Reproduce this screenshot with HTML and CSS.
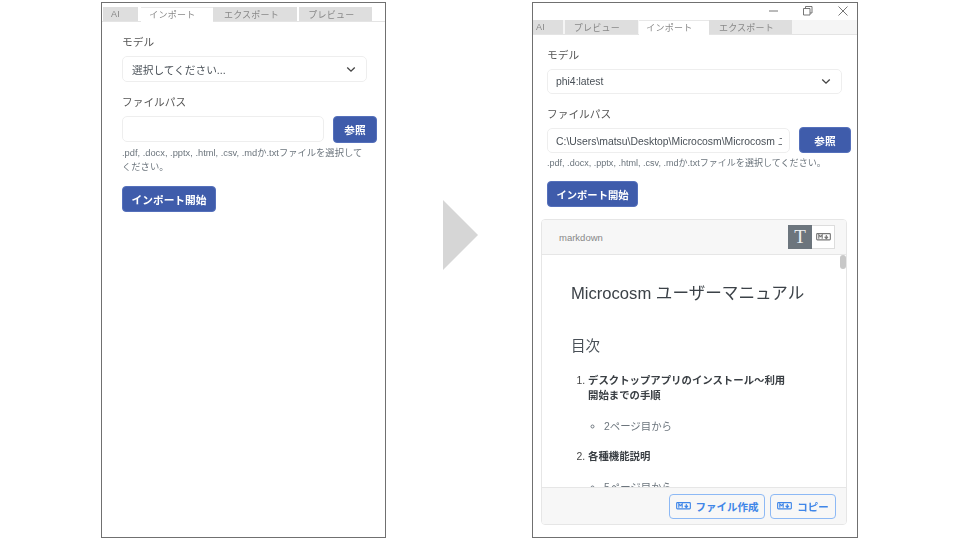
FILE: index.html
```html
<!DOCTYPE html>
<html lang="ja">
<head>
<meta charset="utf-8">
<title>Microcosm インポート</title>
<link rel="stylesheet" href="styles.css">
</head>
<body>
<section class="window window-left">
  <nav class="tabs tabs-left">
    <span class="tab tab-ai-l">AI</span>
    <span class="tab tab-active tab-imp-l">インポート</span>
    <span class="tab tab-exp-l">エクスポート</span>
    <span class="tab tab-pre-l">プレビュー</span>
  </nav>
  <div class="form form-left">
    <div class="label">モデル</div>
    <div class="select select-left"><span>選択してください...</span>
      <svg class="chev" viewBox="0 0 12 8"><path d="M1.5 1.5 6 6l4.5-4.5"/></svg>
    </div>
    <div class="label label-path-l">ファイルパス</div>
    <div class="path-row path-row-l">
      <div class="input"></div>
      <button class="btn btn-browse-l">参照</button>
    </div>
    <p class="hint hint-l">.pdf, .docx, .pptx, .html, .csv, .mdか.txtファイルを選択してください。</p>
    <button class="btn btn-start-l">インポート開始</button>
  </div>
</section>

<div class="arrow"></div>

<section class="window window-right">
  <header class="titlebar">
    <svg class="win-icon win-min" viewBox="0 0 10 10"><path d="M0 5h9"/></svg>
    <svg class="win-icon" viewBox="0 0 10 10"><path d="M.5 2.500h6.500v6.500H.5zM2.500 2.500V.5h6.500v6.500H7"/></svg>
    <svg class="win-icon" viewBox="0 0 10 10"><path d="M.5.5l9 9M9.500.5l-9 9"/></svg>
  </header>
  <nav class="tabs tabs-right">
    <span class="tab tab-ai-r">AI</span>
    <span class="tab tab-pre-r">プレビュー</span>
    <span class="tab tab-active tab-imp-r">インポート</span>
    <span class="tab tab-exp-r">エクスポート</span>
  </nav>
  <div class="form form-right">
    <div class="label">モデル</div>
    <div class="select select-right"><span>phi4:latest</span>
      <svg class="chev" viewBox="0 0 12 8"><path d="M1.500 1.500 6 6l4.500-4.500"/></svg>
    </div>
    <div class="label label-path-r">ファイルパス</div>
    <div class="path-row path-row-r">
      <div class="input input-r"><span class="input-text">C:\Users\matsu\Desktop\Microcosm\Microcosm ユーザーマニュアル.pdf</span></div>
      <button class="btn btn-browse-r">参照</button>
    </div>
    <p class="hint hint-r">.pdf, .docx, .pptx, .html, .csv, .mdか.txtファイルを選択してください。</p>
    <button class="btn btn-start-r">インポート開始</button>
  </div>
  <div class="panel">
    <div class="panel-head">
      <span class="panel-lang">markdown</span>
      <div class="toggle">
        <span class="toggle-t">T</span>
        <span class="toggle-m"><svg class="md md-gray" viewBox="0 0 16 8"><rect x=".7" y=".7" width="14.600" height="6.600" rx=".8"/><path d="M3 6V2l1.800 2 1.800-2v4M11 2v3.500M9.200 4 11 6l1.800-2"/></svg></span>
      </div>
    </div>
    <div class="panel-body">
      <div class="thumb"></div>
      <h1 class="doc-h1">Microcosm ユーザーマニュアル</h1>
      <h2 class="doc-h2">目次</h2>
      <ol class="doc-ol">
        <li><strong>デスクトップアプリのインストール～利用開始までの手順</strong>
          <ul><li>2ページ目から</li></ul>
        </li>
        <li><strong>各種機能説明</strong>
          <ul><li>5ページ目から</li></ul>
        </li>
      </ol>
    </div>
    <div class="panel-foot">
      <button class="out-btn out-create"><svg class="md md-blue" viewBox="0 0 16 8"><rect x=".7" y=".7" width="14.600" height="6.600" rx=".8"/><path d="M3 6V2l1.800 2 1.800-2v4M11 2v3.500M9.200 4 11 6l1.800-2"/></svg>ファイル作成</button>
      <button class="out-btn out-copy"><svg class="md md-blue" viewBox="0 0 16 8"><rect x=".7" y=".7" width="14.600" height="6.600" rx=".8"/><path d="M3 6V2l1.800 2 1.800-2v4M11 2v3.500M9.200 4 11 6l1.800-2"/></svg>コピー</button>
    </div>
  </div>
</section>
</body>
</html>
```
FILE: styles.css
```css
* { box-sizing: border-box; }
html, body { margin: 0; padding: 0; }
body {
  position: relative;
  width: 960px;
  height: 540px;
  overflow: hidden;
  background: #fff;
  font-family: "Liberation Sans", "Noto Sans CJK JP", sans-serif;
  color: #495057;
}
.window {
  position: absolute;
  top: 2px;
  height: 536px;
  outline: 1px solid #707070;
  outline-offset: -1px;
  padding: 1px;
  background: #fff;
  display: flex;
  flex-direction: column;
  overflow: hidden;
}
.window > * { filter: blur(.5px); }
.window-left { left: 101px; width: 285px; padding-top: 5px; }
.window-right { left: 532px; width: 326px; }

.arrow {
  position: absolute;
  left: 443px;
  top: 200px;
  width: 35px;
  height: 70px;
  background: #d6d6d6;
  clip-path: polygon(0 0, 100% 50%, 0 100%);
}

.titlebar {
  height: 17px;
  display: flex;
  justify-content: flex-end;
  align-items: flex-start;
  gap: 25px;
  padding: 3px 9px 0 0;
  flex: none;
}
.win-min { margin-right: -1px; }
.win-icon { width: 10px; height: 10px; fill: none; stroke: #666; stroke-width: .9; }

.tabs {
  display: flex;
  height: 15px;
  flex: none;
  border-bottom: 1px solid #e4e4e4;
  font-size: 9px;
  color: #888;
}
.tabs-right { background: #f5f5f5; }
.tab {
  height: 14px;
  background: #dedede;
  display: flex;
  align-items: center;
  justify-content: center;
  letter-spacing: .25px;
}
.tab-active { background: #fff; box-shadow: inset 0 1px 0 #e8e8e8, 0 1px 0 #fff; }
.tab-ai-l { width: 35px; margin-left: 1px; margin-right: 3px; justify-content: flex-start; padding-left: 8px; }
.tab-imp-l { width: 72px; padding-right: 9px; }
.tab-exp-l { width: 84px; margin-right: 2px; padding-right: 7px; }
.tab-pre-l { width: 73px; padding-right: 8px; }
.tab-ai-r { width: 30px; margin-right: 2px; justify-content: flex-start; padding-left: 3px; }
.tab-pre-r { width: 73px; margin-right: 1px; padding-right: 9px; }
.tab-imp-r { width: 70px; padding-right: 9px; }
.tab-exp-r { width: 83px; padding-right: 8px; }

.form { display: flex; flex-direction: column; align-items: flex-start; flex: none; }
.form-left { padding: 13px 9px 0 20px; }
.form-right { padding: 13px 6px 0 14px; }
.label { font-size: 10.700px; line-height: 14px; color: #555; }
.select {
  height: 26px;
  margin-top: 7px;
  border: 1px solid #eee;
  border-radius: 5px;
  display: flex;
  align-items: center;
  justify-content: space-between;
  padding: 0 10px 0 9px;
  font-size: 10.700px;
  color: #495057;
}
.select-left { width: 245px; }
.select-right { width: 295px; height: 25px; padding-left: 8px; font-size: 10.400px; }
.chev { width: 10px; height: 7px; fill: none; stroke: #444; stroke-width: 1.6; }
.label-path-l { margin-top: 13px; }
.label-path-r { margin-top: 13px; }
.path-row { display: flex; width: 100%; align-items: flex-start; margin-top: 7px; }
.path-row-r { margin-top: 6px; }
.input { height: 26px; border: 1px solid #eee; border-radius: 5px; background: #fff; flex: none; }
.path-row-l .input { width: 202px; }
.input-r { width: 243px; height: 25px; margin-top: 1px; padding: 0 7px 0 8px; display: flex; align-items: center; overflow: hidden; }
.input-text { font-size: 10.400px; white-space: nowrap; overflow: hidden; color: #495057; }
.btn {
  border: 1px solid #5570bb;
  border-radius: 4px;
  background: #3f5cab;
  color: #fff;
  font: bold 10.700px "Liberation Sans", "Noto Sans CJK JP", sans-serif;
  padding: 0;
  flex: none;
}
.btn-browse-l { width: 44px; height: 27px; margin-left: 9px; }
.btn-browse-r { width: 52px; height: 26px; margin-left: 9px; }
.hint { margin: 0; line-height: 14px; color: #6c757d; }
.hint-l { margin-top: 3px; width: 245px; font-size: 9.300px; }
.hint-r { margin-top: 3px; white-space: nowrap; font-size: 9.050px; }
.btn-start-l { width: 94px; height: 26px; margin-top: 12px; }
.btn-start-r { width: 91px; height: 26px; margin-top: 11px; font-size: 10.300px; }

.panel {
  margin: 12px 10px 12px 8px;
  height: 306px;
  flex: none;
  border: 1px solid #e6e6e6;
  border-radius: 4px;
  display: flex;
  flex-direction: column;
  overflow: hidden;
  background: #fff;
}
.panel-head {
  height: 35px;
  flex: none;
  background: #f7f7f7;
  border-bottom: 1px solid #e6e6e6;
  display: flex;
  align-items: center;
  justify-content: space-between;
  padding: 0 11px 0 17px;
}
.panel-lang { font-size: 9.500px; color: #888; }
.toggle { display: flex; height: 24px; width: 47px; border: 1px solid #ddd; background: #fff; }
.toggle-t {
  width: 24px;
  margin: -1px 0 -1px -1px;
  background: #6c757d;
  color: #eef0f2;
  font: 19px/24px "Liberation Serif", serif;
  text-align: center;
}
.toggle-m { flex: 1; display: flex; align-items: center; justify-content: center; }
.md { width: 15px; height: 7.500px; fill: none; stroke-width: 1.200; flex: none; }
.md-gray { stroke: #777; }
.md-blue { stroke: #3f86e8; }

.panel-body { position: relative; flex: 1; min-height: 0; overflow: hidden; padding: 0 0 0 29px; }
.thumb {
  position: absolute;
  right: 0;
  top: 0;
  width: 6px;
  height: 14px;
  border-radius: 3px;
  background: #c8c8c8;
}
.doc-h1 { margin: 27px 0 0; font-size: 16.600px; line-height: 24px; font-weight: 400; color: #3c4248; white-space: nowrap; }
.doc-h2 { margin: 28px 0 0; font-size: 14.500px; line-height: 24px; font-weight: 400; color: #495057; }
.doc-ol { margin: 15px 0 0; padding: 0 0 0 17px; width: 222px; font-size: 10.400px; line-height: 15px; color: #444; }
.doc-ol > li { margin-bottom: 15px; }
.doc-ol strong { font-weight: 700; color: #3a3f44; }
.doc-ol ul { margin: 16px 0 0; padding: 0 0 0 16px; list-style: circle; color: #6c757d; }

.panel-foot {
  height: 37px;
  flex: none;
  background: #f7f7f7;
  border-top: 1px solid #e6e6e6;
  display: flex;
  justify-content: flex-end;
  align-items: center;
  gap: 5px;
  padding: 0 10px 0 0;
}
.out-btn {
  height: 25px;
  border: 1px solid #8db9f5;
  border-radius: 4px;
  background: #f7f7f7;
  color: #3f86e8;
  font: bold 10.500px "Liberation Sans", "Noto Sans CJK JP", sans-serif;
  display: flex;
  align-items: center;
  justify-content: center;
  gap: 5px;
  padding: 0;
}
.out-create { width: 96px; }
.out-copy { width: 66px; }
```
